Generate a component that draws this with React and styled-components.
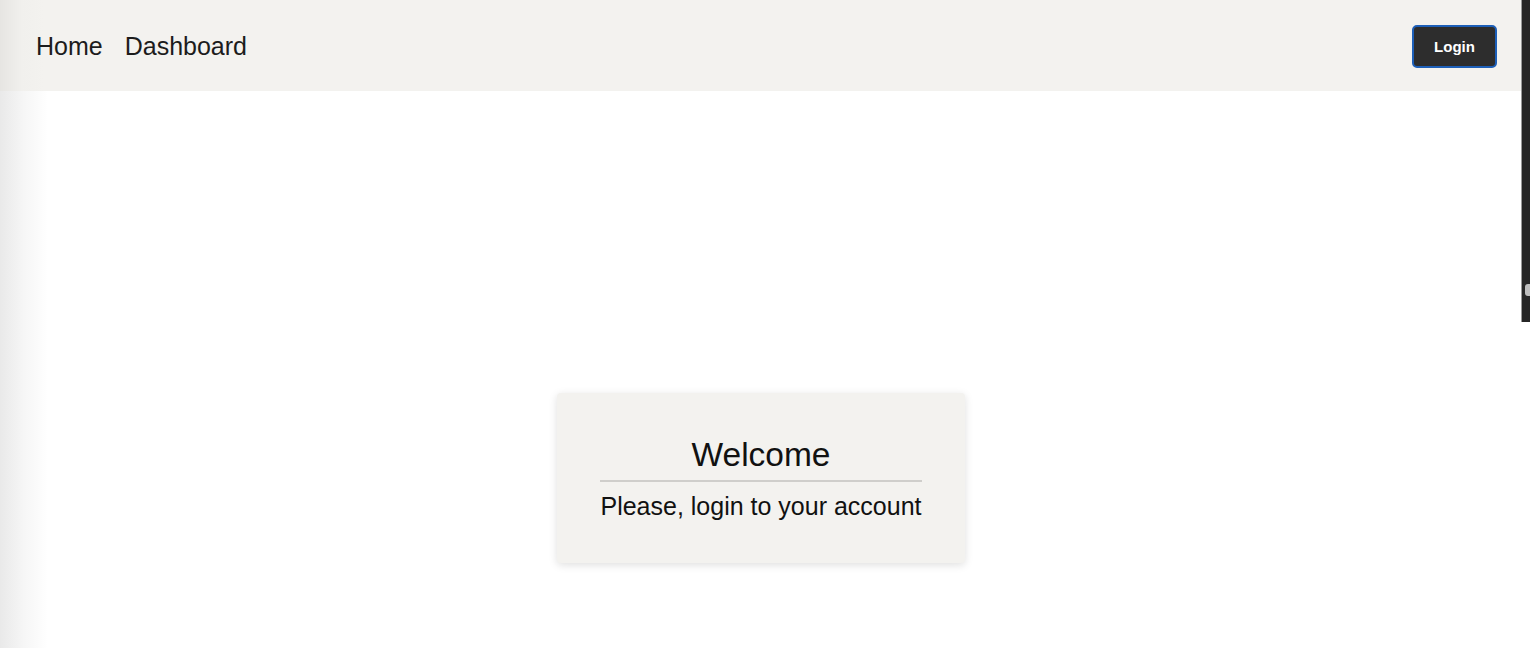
import React from 'react';
import styled, {createGlobalStyle} from "styled-components";

export default function App() {
  return (
    <>
      <GlobalStyle/>
      <Page>
        <Nav>
          <NavLinks>
            <NavLink href="#">Home</NavLink>
            <NavLink href="#">Dashboard</NavLink>
          </NavLinks>
          <LoginButton>Login</LoginButton>
        </Nav>
        <Main>
          <Card>
            <Title>Welcome</Title>
            <Divider/>
            <Subtitle>Please, login to your account</Subtitle>
          </Card>
        </Main>
      </Page>
      <ScrollBar>
        <ScrollKnob/>
      </ScrollBar>
    </>
  );
}

// ---- Styled

const GlobalStyle = createGlobalStyle`
  html, body {
    margin: 0;
    padding: 0;
    height: 100%;
  }

  body {
    font-family: "Liberation Sans", Arial, sans-serif;
    color: #111;
    background: linear-gradient(to right, #e9e9e9 0, #f6f6f6 24px, #fff 48px);
    overflow: hidden;
  }
`;

const Page = styled.div`
  width: 1522px;
  min-height: 648px;
  display: flex;
  flex-direction: column;
`;

const Nav = styled.nav`
  height: 91px;
  display: flex;
  align-items: center;
  justify-content: space-between;
  padding: 0 25px 0 36px;
  box-sizing: border-box;
  background: linear-gradient(to right, #e6e5e2 0, #f1f0ed 22px, #f3f2ef 44px);
`;

const NavLinks = styled.div`
  display: flex;
  gap: 22px;
  padding-top: 1px;
`;

const NavLink = styled.a`
  font-size: 25px;
  color: #1c1c1c;
  text-decoration: none;
`;

const LoginButton = styled.button`
  width: 85px;
  height: 43px;
  margin-top: 1px;
  border: 2px solid #1d5fb8;
  border-radius: 5px;
  background: #2d2d2d;
  color: #fff;
  font-family: "Liberation Sans", Arial, sans-serif;
  font-size: 15px;
  font-weight: 700;
  cursor: pointer;
`;

const Main = styled.main`
  display: flex;
  justify-content: center;
  padding-top: 302px;
`;

const Card = styled.div`
  width: 408px;
  height: 170px;
  box-sizing: border-box;
  padding: 43px 40px 0;
  background: #f3f2ef;
  border-radius: 4px;
  box-shadow: 0 2px 8px rgba(0, 0, 0, .13);
  display: flex;
  flex-direction: column;
  align-items: center;
`;

const Title = styled.h1`
  margin: 0;
  font-size: 33.5px;
  font-weight: 400;
  line-height: 38px;
  color: #111;
`;

const Divider = styled.hr`
  width: 322px;
  margin: 6px 0 9px;
  border: none;
  border-top: 2px solid #cfcecb;
`;

const Subtitle = styled.p`
  margin: 0;
  font-size: 25px;
  line-height: 30px;
  color: #111;
  white-space: nowrap;
`;

const ScrollBar = styled.div`
  position: fixed;
  top: 0;
  right: 0;
  width: 8px;
  height: 322px;
  background: #262626;
  border-left: 1px solid #9a9a9a;
`;

const ScrollKnob = styled.div`
  position: absolute;
  top: 284px;
  right: 0;
  width: 5px;
  height: 12px;
  border-radius: 3px 0 0 3px;
  background: #bdbdbd;
`;
